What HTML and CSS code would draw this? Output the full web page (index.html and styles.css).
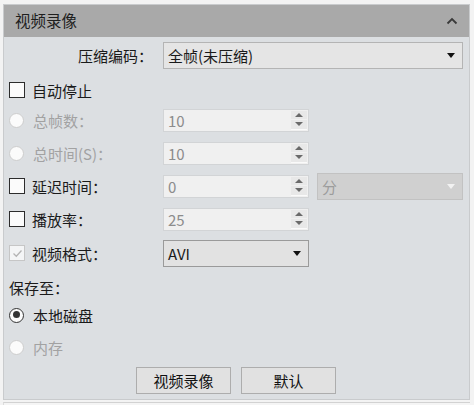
FILE: index.html
```html
<!DOCTYPE html>
<html lang="zh-CN">
  <head>
    <meta charset="UTF-8" />
    <meta name="viewport" content="width=device-width, initial-scale=1.0" />
    <title>视频录像</title>
    <link rel="stylesheet" href="styles.css">
  </head>
  <body>
    <div class="panel">
      <div class="panel-head">
        <span class="panel-title">视频录像</span>
        <svg class="collapse" width="12" height="8" viewBox="0 0 12 8">
          <path d="M1.5 6.5 L6 2 L10.5 6.5" fill="none" stroke="#3a3a3a" stroke-width="1.8" />
        </svg>
      </div>
      <div class="panel-body">
        <div class="row r-codec">
          <span class="opt opt-right">压缩编码：</span>
          <div class="combo combo-wide">
            <span class="combo-text">全帧(未压缩)</span>
            <i class="caret"></i>
          </div>
        </div>

        <div class="row r-auto">
          <span class="opt"><i class="check"></i>自动停止</span>
        </div>

        <div class="row r-frames">
          <span class="opt disabled"><i class="radio radio-off"></i>总帧数：</span>
          <div class="spin">
            <span class="spin-val">10</span>
            <span class="spin-btns"><b class="up"></b><b class="down"></b></span>
          </div>
        </div>

        <div class="row">
          <span class="opt disabled"><i class="radio radio-off"></i>总时间(S)：</span>
          <div class="spin">
            <span class="spin-val">10</span>
            <span class="spin-btns"><b class="up"></b><b class="down"></b></span>
          </div>
        </div>

        <div class="row">
          <span class="opt"><i class="check"></i>延迟时间：</span>
          <div class="spin">
            <span class="spin-val">0</span>
            <span class="spin-btns"><b class="up"></b><b class="down"></b></span>
          </div>
          <div class="combo combo-off">
            <span class="combo-text">分</span>
            <i class="caret caret-off"></i>
          </div>
        </div>

        <div class="row">
          <span class="opt"><i class="check"></i>播放率：</span>
          <div class="spin">
            <span class="spin-val">25</span>
            <span class="spin-btns"><b class="up"></b><b class="down"></b></span>
          </div>
        </div>

        <div class="row r-format">
          <span class="opt">
            <i class="check check-off">
              <svg width="13" height="13" viewBox="0 0 13 13">
                <path d="M2.5 6.5 L5.3 9.3 L10.5 3.5" fill="none" stroke="#b4b4b4" stroke-width="1.3" />
              </svg>
            </i>视频格式：
          </span>
          <div class="combo combo-focus">
            <span class="combo-text">AVI</span>
            <i class="caret"></i>
          </div>
        </div>

        <div class="row r-save">
          <span class="opt">保存至：</span>
        </div>

        <div class="row r-local">
          <span class="opt"><i class="radio radio-on"></i>本地磁盘</span>
        </div>

        <div class="row r-mem">
          <span class="opt disabled"><i class="radio radio-off"></i>内存</span>
        </div>

        <div class="row r-btns">
          <button class="btn">视频录像</button>
          <button class="btn">默认</button>
        </div>
      </div>
    </div>
    <div class="panel-next"></div>
  </body>
</html>
```

FILE: styles.css
```css
* {
  box-sizing: border-box;
  margin: 0;
  padding: 0;
}
body {
  background-color: #f3f3f3;
  font-family: "Noto Sans CJK SC", "Noto Sans", sans-serif;
  font-size: 15px;
  color: #1a1a1a;
  padding: 4px 4px 0 3px;
  overflow: hidden;
}
.panel {
  width: 467px;
  border: 1px solid #c9cbcd;
  background-color: #dcdfe2;
}
.panel-head {
  height: 32px;
  background-color: #a9a9a9;
  display: flex;
  align-items: center;
  justify-content: space-between;
  padding: 0 11px 0 11px;
}
.panel-title {
  font-size: 15.5px;
  line-height: 1;
  color: #1e1e1e;
}
.panel-body {
  padding: 0 6px 5px 5px;
  display: flex;
  flex-direction: column;
}
.row {
  height: 28px;
  margin-top: 5px;
  display: flex;
  align-items: center;
}
.r-codec {
  margin-top: 4px;
}
.r-auto {
  margin-top: 7px;
}
.r-frames {
  margin-top: 2px;
}
.r-format,
.r-save {
  margin-top: 6px;
}
.r-local {
  margin-top: 0;
}
.r-mem {
  margin-top: 4px;
}
.r-btns {
  margin-top: 5px;
  justify-content: center;
  gap: 10px;
}
.opt {
  width: 154px;
  flex: none;
  display: flex;
  align-items: center;
  line-height: 1;
  white-space: nowrap;
}
.opt-right {
  justify-content: flex-end;
  padding-right: 10px;
}
.disabled {
  color: #a2a2a2;
}

/* checkbox + radio */
.check {
  width: 16px;
  height: 16px;
  border: 1.5px solid #2c2c2c;
  background-color: #fbfbfb;
  margin-right: 7px;
  display: flex;
  align-items: center;
  justify-content: center;
}
.check-off {
  border: 1px solid #c6c6c6;
  background-color: #f4f5f6;
}
.radio {
  width: 15px;
  height: 15px;
  border-radius: 50%;
  margin-right: 9px;
  background-color: #fbfbfb;
  position: relative;
}
.radio-off {
  border: 1px solid #cdcdcd;
}
.radio-on {
  border: 1.5px solid #333;
}
.radio-on::after {
  content: "";
  position: absolute;
  left: 2.5px;
  top: 2.5px;
  width: 7px;
  height: 7px;
  border-radius: 50%;
  background-color: #333;
}

/* combo boxes */
.combo {
  height: 27px;
  display: flex;
  align-items: center;
  justify-content: space-between;
  background-color: #e5e5e5;
  border: 1px solid #b4b4b4;
  padding: 0 7px 0 4px;
  line-height: 1;
}
.combo-wide {
  width: 300px;
}
.combo-focus {
  width: 146px;
  border-color: #9a9a9a;
  background-color: #e2e2e2;
}
.combo-off {
  width: 146px;
  margin-left: 8px;
  background-color: #d0d0d0;
  border-color: #c2c2c2;
  color: #9c9c9c;
}
.caret {
  width: 0;
  height: 0;
  border-left: 4.5px solid transparent;
  border-right: 4.5px solid transparent;
  border-top: 5px solid #111;
}
.caret-off {
  border-top-color: #f2f2f2;
}

/* spin boxes */
.spin {
  width: 146px;
  height: 23px;
  display: flex;
  align-items: center;
  background-color: #f0f0f0;
  border: 1px solid #d2d4d6;
  padding: 0 1px 0 4px;
}
.spin-val {
  flex: 1;
  line-height: 1;
  color: #8c8c8c;
}
.spin-btns {
  width: 16px;
  height: 19px;
  display: flex;
  flex-direction: column;
  gap: 1px;
  border-bottom: 1px solid #fafafa;
}
.spin-btns b {
  flex: 1;
  background-color: #e8e8e8;
  display: flex;
  align-items: center;
  justify-content: center;
}
.spin-btns b::after {
  content: "";
  border-left: 4px solid transparent;
  border-right: 4px solid transparent;
}
.spin-btns .up::after {
  border-bottom: 4px solid #6a6a6a;
}
.spin-btns .down::after {
  border-top: 4px solid #6a6a6a;
}

/* buttons */
.btn {
  width: 95px;
  height: 27px;
  font-family: inherit;
  font-size: 15px;
  line-height: 1;
  color: #111;
  background-color: #e1e1e1;
  border: 1px solid #adadad;
}
.panel-next {
  margin-top: 2px;
  width: 467px;
  height: 20px;
  border-top: 1px solid #d2d2d2;
  border-left: 1px solid #dcdcdc;
  background-color: #f5f5f5;
}
```
